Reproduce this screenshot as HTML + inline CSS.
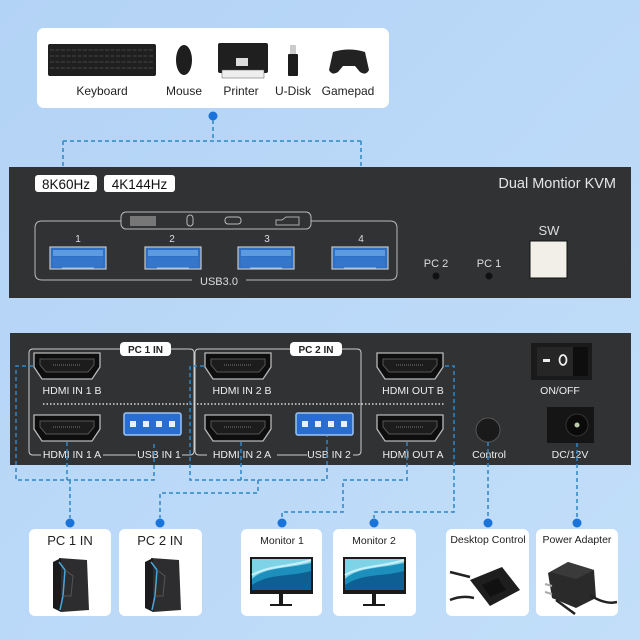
<!DOCTYPE html>
<html><head><meta charset="utf-8">
<style>
html,body{margin:0;padding:0;width:640px;height:640px;overflow:hidden;background:#b9d9f8}
svg{display:block}
text{font-family:"Liberation Sans",Arial,sans-serif}
</style></head><body>
<svg width="640" height="640" viewBox="0 0 640 640" xmlns="http://www.w3.org/2000/svg">
<defs>
<linearGradient id="bg" x1="0" y1="0" x2="1" y2="1">
<stop offset="0" stop-color="#b3d3f6"/><stop offset="1" stop-color="#c2def9"/></linearGradient>
<g id="hdmi">
<path d="M1,1 H67 V15 L59,27 H9 L1,15 Z" fill="#0e0e0e" stroke="#b8b8b8" stroke-width="1.3"/>
<path d="M7,7 H61 V13 L55,20 H13 L7,13 Z" fill="#1c1c1c" stroke="#555" stroke-width="1"/>
<line x1="20" y1="13" x2="48" y2="13" stroke="#777" stroke-width="1" stroke-dasharray="1 1"/>
</g>
<g id="usbf">
<rect x="0" y="0" width="56" height="22" fill="#2f6fc4" stroke="#c8c8c8" stroke-width="1.2"/>
<rect x="3" y="3" width="50" height="6" fill="#5c9be0"/>
<rect x="3" y="10" width="50" height="10" fill="#3476cc"/>
<line x1="12" y1="21" x2="44" y2="21" stroke="#9cc3ef" stroke-width="1"/>
</g>
<g id="usbb">
<rect x="0" y="0" width="57" height="22" rx="2" fill="#2a6dd0" stroke="#9cc4f0" stroke-width="1.5"/>
<rect x="6" y="8" width="6" height="6" fill="#e8f0ff"/><rect x="19" y="8" width="6" height="6" fill="#e8f0ff"/>
<rect x="32" y="8" width="6" height="6" fill="#e8f0ff"/><rect x="45" y="8" width="6" height="6" fill="#e8f0ff"/>
</g>
<g id="pc">
<path d="M8,2 L36,4 L38,54 L10,56 Z" fill="#2d2d30"/>
<path d="M2,6 L10,2 L10,56 L2,52 Z" fill="#1b1b1d"/>
<path d="M8,6 L14,14 L12,40 L9,54" fill="none" stroke="#4aa6d8" stroke-width="1.5"/>
<path d="M14,14 L22,20 L20,40 L12,40" fill="none" stroke="#555" stroke-width="1"/>
</g>
<g id="mon">
<rect x="0" y="0" width="63" height="37" fill="#1a1a1a"/>
<rect x="2" y="2" width="59" height="31" fill="#7fd3e6"/>
<path d="M2,22 C15,10 35,12 61,6 V33 H2 Z" fill="#1d8fbc"/>
<path d="M2,28 C20,16 40,20 61,14 V33 H2 Z" fill="#0e5f93"/>
<path d="M2,18 C20,8 40,10 61,3" fill="none" stroke="#c9f0fa" stroke-width="2"/>
<rect x="29" y="37" width="4" height="11" fill="#1a1a1a"/>
<rect x="20" y="47" width="22" height="2" fill="#1a1a1a"/>
</g>
</defs>
<rect width="640" height="640" fill="url(#bg)"/>

<!-- top peripherals card -->
<rect x="37" y="28" width="352" height="80" rx="7" fill="#fff"/>
<rect x="48" y="44" width="108" height="32" rx="2" fill="#1f1f1f"/>
<g stroke="#444" stroke-width="1">
<line x1="50" y1="50" x2="154" y2="50" stroke-dasharray="4 1.5"/>
<line x1="50" y1="56" x2="154" y2="56" stroke-dasharray="4 1.5"/>
<line x1="50" y1="62" x2="154" y2="62" stroke-dasharray="4 1.5"/>
<line x1="50" y1="68" x2="154" y2="68" stroke-dasharray="4 1.5"/>
</g>
<ellipse cx="184" cy="60" rx="8" ry="15" fill="#1e1e1e"/>
<rect x="218" y="43" width="50" height="30" rx="2" fill="#1f1f1f"/>
<rect x="236" y="58" width="12" height="8" fill="#ddd"/>
<rect x="222" y="70" width="42" height="8" fill="#eee" stroke="#555" stroke-width="0.5"/>
<rect x="288" y="54" width="10" height="22" rx="1" fill="#1c1c1c"/>
<rect x="290" y="45" width="6" height="9" fill="#ccc"/>
<path d="M333,52 Q349,47 365,52 L369,70 Q366,76 360,72 L355,66 H343 L338,72 Q332,76 329,70 Z" fill="#222"/>
<g font-size="12" fill="#222" text-anchor="middle">
<text x="102" y="95">Keyboard</text><text x="184" y="95">Mouse</text><text x="241" y="95">Printer</text><text x="293" y="95">U-Disk</text><text x="348" y="95">Gamepad</text>
</g>
<circle cx="213" cy="116" r="4.5" fill="#1a73d9"/>
<g fill="none" stroke="#2f86c6" stroke-width="1.5" stroke-dasharray="4 3">
<path d="M213,120 V141 M63,141 H361 M63,141 V167 M361,141 V167"/>
</g>

<!-- front panel -->
<rect x="9" y="167" width="622" height="131" fill="#303234"/>
<rect x="35" y="175" width="62" height="17" rx="3" fill="#fff"/>
<rect x="104" y="175" width="71" height="17" rx="3" fill="#fff"/>
<text x="66" y="189" font-size="13.5" fill="#111" text-anchor="middle">8K60Hz</text>
<text x="139.5" y="189" font-size="13.5" fill="#111" text-anchor="middle">4K144Hz</text>
<text x="616" y="188" font-size="14.5" fill="#e6e6e6" text-anchor="end">Dual Montior KVM</text>
<path d="M121,221 H42 Q35,221 35,228 V273 Q35,280 42,280 H192 M246,280 H390 Q397,280 397,273 V228 Q397,221 390,221 H311" fill="none" stroke="#bbb" stroke-width="1"/>
<rect x="121" y="212" width="190" height="17" rx="5" fill="#303234" stroke="#bbb" stroke-width="1"/>
<rect x="130" y="216" width="26" height="10" fill="#777"/>
<rect x="187" y="215" width="6" height="11" rx="3" fill="none" stroke="#bbb"/>
<rect x="225" y="217" width="16" height="7" rx="3" fill="none" stroke="#bbb"/>
<path d="M276,225 H299 V217 H286 L282,220 H276 Z" fill="none" stroke="#aaa"/>
<g font-size="10" fill="#ddd" text-anchor="middle">
<text x="78" y="242">1</text><text x="172" y="242">2</text><text x="267" y="242">3</text><text x="361" y="242">4</text>
<text x="219" y="285" font-size="11">USB3.0</text>
<text x="436" y="267" font-size="11">PC 2</text><text x="489" y="267" font-size="11">PC 1</text>
<text x="549" y="235" font-size="13">SW</text>
</g>
<use href="#usbf" x="50" y="247"/><use href="#usbf" x="145" y="247"/><use href="#usbf" x="238" y="247"/><use href="#usbf" x="332" y="247"/>
<circle cx="436" cy="276" r="3.5" fill="#111"/><circle cx="489" cy="276" r="3.5" fill="#111"/>
<rect x="530" y="241" width="37" height="37" fill="#f2efe8" stroke="#111" stroke-width="1"/>

<!-- back panel -->
<rect x="10" y="333" width="621" height="132" fill="#303234"/>
<path d="M120,349 H33 Q29,349 29,353 V451 Q29,455 33,455 H41 M103,455 H136 M182,455 H190 Q194,455 194,451 V353 Q194,349 190,349 H171" fill="none" stroke="#ccc" stroke-width="1"/>
<path d="M290,349 H199 Q195,349 195,353 V451 Q195,455 199,455 H207 M277,455 H307 M353,455 H357 Q361,455 361,451 V353 Q361,349 357,349 H342" fill="none" stroke="#ccc" stroke-width="1"/>
<rect x="120" y="342" width="51" height="14" rx="4" fill="#fff"/>
<rect x="290" y="342" width="52" height="14" rx="4" fill="#fff"/>
<g font-size="10" font-weight="bold" fill="#222" text-anchor="middle"><text x="145.5" y="353">PC 1 IN</text><text x="316" y="353">PC 2 IN</text></g>
<use href="#hdmi" x="33" y="352"/><use href="#hdmi" x="204" y="352"/><use href="#hdmi" x="376" y="352"/>
<use href="#hdmi" x="33" y="414"/><use href="#hdmi" x="204" y="414"/><use href="#hdmi" x="376" y="414"/>
<use href="#usbb" x="124" y="413"/><use href="#usbb" x="296" y="413"/>
<line x1="43" y1="404" x2="445" y2="404" stroke="#ddd" stroke-width="1.5" stroke-dasharray="1.5 2"/>
<g font-size="10.5" fill="#eee" text-anchor="middle">
<text x="72" y="394">HDMI IN 1 B</text><text x="242" y="394">HDMI IN 2 B</text><text x="413" y="394">HDMI OUT B</text>
<text x="72" y="458">HDMI IN 1 A</text><text x="159" y="458">USB IN 1</text><text x="242" y="458">HDMI IN 2 A</text><text x="329" y="458">USB IN 2</text><text x="413" y="458">HDMI OUT A</text>
<text x="489" y="458">Control</text><text x="560" y="394">ON/OFF</text><text x="570" y="458">DC/12V</text>
</g>
<rect x="531" y="343" width="61" height="37" fill="#1a1a1a"/>
<rect x="537" y="347" width="36" height="29" fill="#262626"/>
<rect x="573" y="347" width="15" height="29" fill="#0e0e0e"/>
<rect x="543" y="359" width="7" height="3" fill="#eee"/>
<ellipse cx="563" cy="360" rx="3.5" ry="5" fill="none" stroke="#eee" stroke-width="1.8"/>
<rect x="547" y="407" width="47" height="36" fill="#151515"/>
<circle cx="577" cy="425" r="11" fill="#0a0a0a" stroke="#333"/>
<circle cx="577" cy="425" r="2.5" fill="#bca"/>
<circle cx="488" cy="430" r="12" fill="#1a1a1a" stroke="#555" stroke-width="1"/>

<!-- connector lines -->
<g fill="none" stroke="#2f86c6" stroke-width="1.5" stroke-dasharray="4 3">
<path d="M33,366 H16 V480 H154 V444"/>
<path d="M67,442 V480 M70,480 V518"/>
<path d="M204,366 H190 V480 H327 V436"/>
<path d="M241,442 V480 M258,480 V493 H160 V518"/>
<path d="M445,366 H454 V512 H374 V518"/>
<path d="M407,442 V480 H343 V512 H282 V518"/>
<path d="M488,442 V518 M577,443 V518"/>
</g>
<g fill="#1a73d9">
<circle cx="70" cy="523" r="4.5"/><circle cx="160" cy="523" r="4.5"/><circle cx="282" cy="523" r="4.5"/>
<circle cx="374" cy="523" r="4.5"/><circle cx="488" cy="523" r="4.5"/><circle cx="577" cy="523" r="4.5"/>
</g>

<!-- bottom cards -->
<g fill="#fff">
<rect x="29" y="529" width="82" height="87" rx="6"/><rect x="119" y="529" width="83" height="87" rx="6"/>
<rect x="241" y="529" width="81" height="87" rx="6"/><rect x="333" y="529" width="83" height="87" rx="6"/>
<rect x="446" y="529" width="83" height="87" rx="6"/><rect x="536" y="529" width="82" height="87" rx="6"/>
</g>
<g fill="#222" text-anchor="middle">
<text x="70" y="545" font-size="13">PC 1 IN</text><text x="160" y="545" font-size="13">PC 2 IN</text>
<text x="282" y="544" font-size="10.5">Monitor 1</text><text x="374" y="544" font-size="10.5">Monitor 2</text>
<text x="488" y="543" font-size="10.5">Desktop Control</text><text x="577" y="543" font-size="10.5">Power Adapter</text>
</g>
<use href="#pc" x="51" y="556"/><use href="#pc" x="143" y="556"/>
<use href="#mon" x="250" y="557"/><use href="#mon" x="343" y="557"/>
<path d="M470,580 L502,567 L520,590 L490,606 Z" fill="#1e1e1e"/>
<path d="M482,585 L498,578 L506,590 L490,597 Z" fill="#111"/>
<path d="M450,600 Q462,595 474,598 M450,572 L470,577" stroke="#222" stroke-width="2.5" fill="none"/>
<path d="M548,573 L568,562 L594,570 L596,598 L576,608 L552,598 Z" fill="#2a2a2a"/>
<path d="M568,562 L594,570 L576,579 L550,572 Z" fill="#3a3a3a"/>
<path d="M545,584 L552,586 M545,592 L552,594" stroke="#aaa" stroke-width="2"/>
<path d="M590,595 Q605,605 617,602 M556,600 L575,614" stroke="#222" stroke-width="2.5" fill="none"/>
</svg>
</body></html>
